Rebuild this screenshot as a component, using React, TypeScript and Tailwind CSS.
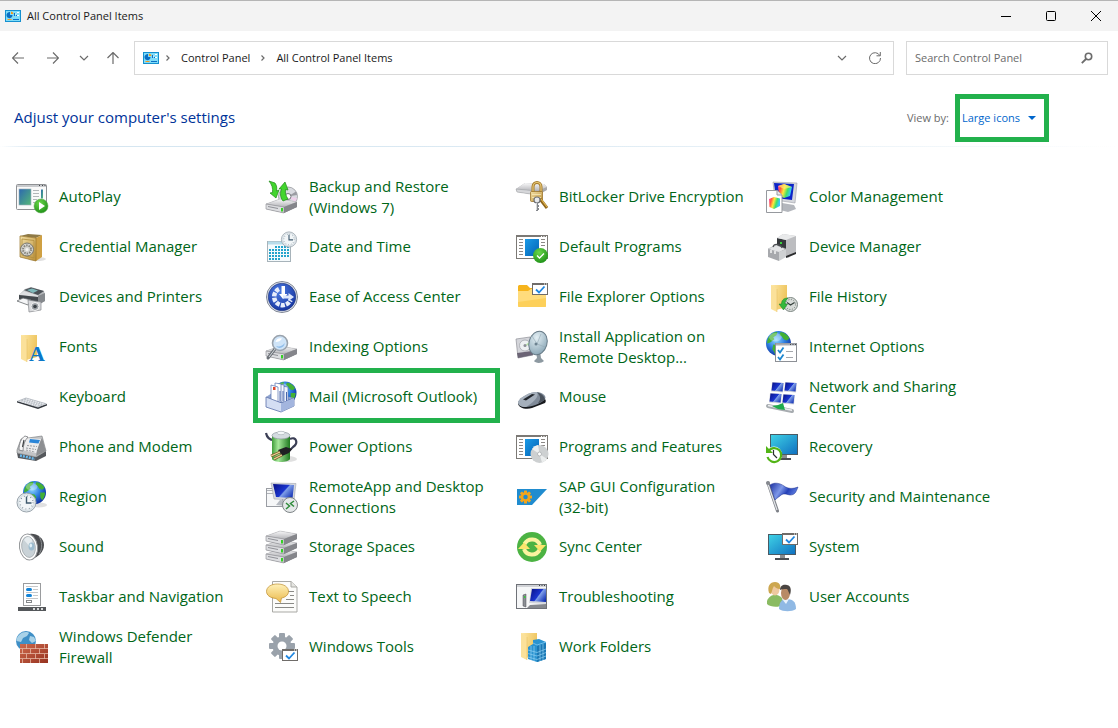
import { useState } from "react";
import type { ReactNode } from "react";

// Gradients shared by all the item icons
function IconDefs() {
  return (
    <svg width="0" height="0" className="block" aria-hidden="true">
      <defs>
        <radialGradient id="globe" cx="0.4" cy="0.35" r="0.7">
          <stop offset="0" stopColor="#8fd8ff" />
          <stop offset="0.5" stopColor="#2f7fe0" />
          <stop offset="1" stopColor="#0b2a9c" />
        </radialGradient>
        <radialGradient id="greenBall" cx="0.4" cy="0.3" r="0.8">
          <stop offset="0" stopColor="#6ad64a" />
          <stop offset="1" stopColor="#178a12" />
        </radialGradient>
        <radialGradient id="blueBall" cx="0.4" cy="0.3" r="0.8">
          <stop offset="0" stopColor="#4c7be0" />
          <stop offset="1" stopColor="#122f9c" />
        </radialGradient>
        <radialGradient id="dish" cx="0.35" cy="0.3" r="0.8">
          <stop offset="0" stopColor="#e3eff4" />
          <stop offset="1" stopColor="#86a3b3" />
        </radialGradient>
        <linearGradient id="folder" x1="0" x2="1" y1="0" y2="0.3">
          <stop offset="0" stopColor="#ffe9a8" />
          <stop offset="1" stopColor="#eec55f" />
        </linearGradient>
        <linearGradient id="gold" x1="0" x2="1" y1="0" y2="1">
          <stop offset="0" stopColor="#f3e0a6" />
          <stop offset="1" stopColor="#bb8f38" />
        </linearGradient>
        <linearGradient id="silver" x1="0" x2="0" y1="0" y2="1">
          <stop offset="0" stopColor="#f8f8f9" />
          <stop offset="1" stopColor="#b4b5b9" />
        </linearGradient>
        <linearGradient id="screen" x1="0" x2="1" y1="0" y2="1">
          <stop offset="0" stopColor="#3fd3e6" />
          <stop offset="1" stopColor="#0f6fc0" />
        </linearGradient>
        <linearGradient id="blueScreen" x1="0" x2="1" y1="0.2" y2="0.8">
          <stop offset="0" stopColor="#0a1590" />
          <stop offset="0.5" stopColor="#1a35cf" />
          <stop offset="0.56" stopColor="#7f9fe8" />
          <stop offset="1" stopColor="#1230b4" />
        </linearGradient>
        <linearGradient id="azure" x1="0" x2="1" y1="0" y2="1">
          <stop offset="0" stopColor="#1a9be8" />
          <stop offset="1" stopColor="#0462b4" />
        </linearGradient>
        <linearGradient id="photo" x1="0" x2="1" y1="0" y2="1">
          <stop offset="0" stopColor="#2c67b0" />
          <stop offset="1" stopColor="#54b878" />
        </linearGradient>
        <linearGradient id="battery" x1="0" x2="1" y1="0" y2="0">
          <stop offset="0" stopColor="#3f9e3a" />
          <stop offset="0.35" stopColor="#a6e89a" />
          <stop offset="1" stopColor="#1f7a20" />
        </linearGradient>
        <linearGradient id="brick" x1="0" x2="1" y1="0" y2="1">
          <stop offset="0" stopColor="#cf6a4c" />
          <stop offset="1" stopColor="#963220" />
        </linearGradient>
        <linearGradient id="bubble" x1="0" x2="0" y1="0" y2="1">
          <stop offset="0" stopColor="#fff1b8" />
          <stop offset="1" stopColor="#eab94c" />
        </linearGradient>
        <linearGradient id="flag" x1="0" x2="1" y1="0" y2="0.4">
          <stop offset="0" stopColor="#1b2fa0" />
          <stop offset="0.45" stopColor="#7d97e8" />
          <stop offset="0.7" stopColor="#2440b8" />
          <stop offset="1" stopColor="#5f7fe0" />
        </linearGradient>
        <linearGradient id="rainbow" x1="0" x2="1" y1="0" y2="0.3">
          <stop offset="0" stopColor="#ff4fd0" />
          <stop offset="0.25" stopColor="#ff5a3c" />
          <stop offset="0.5" stopColor="#ffe83c" />
          <stop offset="0.75" stopColor="#3fe06a" />
          <stop offset="1" stopColor="#38c8ff" />
        </linearGradient>
      </defs>
    </svg>
  );
}

function Globe({ cx, cy, r }: { cx: number; cy: number; r: number }) {
  return (
    <g transform={`translate(${cx} ${cy}) scale(${r / 12})`}>
      <circle r="12" fill="url(#globe)" />
      <path
        d="M-9.500-6C-7-10-3-11.500-1-11l-1 3-3 2 1 2-4 3-3 1c0-2 .5-4 1.500-6zM2-11c4 .5 7 3 8.500 6L8-3 5-4 3-7 1-8zM-5 1l5 1 2 3-2 3-1 3.500c-2 0-3-1-3-3l-2-3zM6 0l5 0c0 3-1 6-3 8L6 5z"
        fill="#43b034"
      />
      <ellipse cx="-3" cy="-6" rx="6" ry="4" fill="#fff" opacity="0.3" />
    </g>
  );
}

function Clock({ cx, cy, r }: { cx: number; cy: number; r: number }) {
  return (
    <g transform={`translate(${cx} ${cy}) scale(${r / 10})`}>
      <circle r="9.500" fill="#e4ebf0" stroke="#9aa4ac" />
      <circle r="7.800" fill="#f2f6f8" stroke="#c3ccd2" strokeWidth="0.600" />
      <circle r="6.500" fill="none" stroke="#6d7f8c" strokeWidth="1.200" strokeDasharray="0.700 2.700" />
      <path d="M0-6V0.500H5" fill="none" stroke="#3f5a6e" strokeWidth="1.400" />
    </g>
  );
}

function Gear({ cx, cy, r, color, hole }: { cx: number; cy: number; r: number; color: string; hole: string }) {
  return (
    <g transform={`translate(${cx} ${cy}) scale(${r / 13})`} fill={color}>
      {[0, 45, 90, 135].map((angle) => (
        <rect key={angle} x="-3" y="-13" width="6" height="26" rx="1" transform={`rotate(${angle})`} />
      ))}
      <circle r="9.500" />
      <circle r="4.500" fill={hole} />
    </g>
  );
}

function Drive({ y }: { y: number }) {
  return (
    <g transform={`translate(0 ${y})`}>
      <path d="M0 5 14 0 31 3V8L18 14 0 10z" fill="#8c8d92" />
      <path d="M0 5 14 0 31 3 18 8z" fill="url(#silver)" stroke="#b8b9bd" strokeWidth="0.500" />
      <path d="M0 5 18 8V14L0 10z" fill="#dcdde0" stroke="#8b8c90" strokeWidth="0.600" />
      <path d="M18 8 31 3V8L18 14z" fill="#85868b" />
      <path d="M2 7.500 12 9.500" stroke="#909197" />
      <rect x="15" y="9" width="2" height="3.500" fill="#35d024" />
    </g>
  );
}

function AppWindow({ children }: { children?: ReactNode }) {
  return (
    <>
      <rect x="0.500" y="4.500" width="31" height="23" fill="#fff" stroke="#7c7975" />
      <path d="M0 5H32" stroke="#7c7975" strokeWidth="2" />
      <path d="M25 5.500h1M27.500 5.500h1M30 5.500h1" stroke="#fff" />
      <path
        d="M3 8.500h4M3 11.500h4M3 14.500h4M3 17.500h4M3 20.500h4M3 23.500h4M25 8.500h4M25 11.500h4M25 14.500h4"
        stroke="#8c8986"
      />
      <rect x="9" y="8" width="14" height="17" fill="url(#azure)" />
      {children}
    </>
  );
}

function CheckWindow({ y }: { y: number }) {
  return (
    <g transform={`translate(16 ${y})`}>
      <rect x="0.500" y="0.500" width="15" height="11" fill="#fff" stroke="#6f6c69" />
      <path d="M0 1H16" stroke="#6f6c69" strokeWidth="2" />
      <path d="M12 1h1M14 1h1" stroke="#fff" />
      <path d="M4 6.500 7 9.500 12.500 3.500" fill="none" stroke="#1f86e0" strokeWidth="1.800" />
    </g>
  );
}

function TallFolder() {
  return (
    <>
      <path d="M5 4H21V26L10 29z" fill="url(#folder)" />
      <path d="M5 4 11 8V31L5 28z" fill="#fbe19a" />
      <path d="M11 8V31" stroke="#e3b95a" strokeWidth="0.500" />
    </>
  );
}

function Monitor({ x }: { x: number }) {
  return (
    <g transform={`translate(${x} 3)`}>
      <path d="M12 20h5v4h-5z" fill="#8a8d90" />
      <path d="M7 25h14" stroke="#4a4e52" strokeWidth="2" />
      <rect x="0.500" y="0.500" width="27" height="20" fill="url(#screen)" stroke="#4a5a64" />
    </g>
  );
}

const icons: Record<string, ReactNode> = {
  autoplay: (
    <>
      <rect x="0.500" y="3.500" width="30" height="25" rx="1" fill="#fafafa" stroke="#8f9194" />
      <path d="M1 5h29" stroke="#c9cbce" strokeWidth="2" />
      <path d="M23 4.500h1M26 4.500h1M28.500 4.500h1" stroke="#44474a" />
      <rect x="3" y="8" width="12" height="16" fill="url(#photo)" stroke="#9fb0bb" strokeWidth="0.600" />
      <path d="M17 9.500h6M17 12.500h6M17 15.500h6M17 18.500h4M17 21.500h2" stroke="#b3b7ba" />
      <path d="M25 8.500h2v9h-2z" fill="url(#photo)" />
      <circle cx="25" cy="25" r="7" fill="url(#greenBall)" stroke="#5aa64c" strokeWidth="0.500" />
      <path d="M23 21 29 25 23 29z" fill="#fff" />
    </>
  ),
  backup: (
    <>
      <circle cx="22" cy="15.500" r="9.500" fill="#d9dbe0" stroke="#8b8d92" strokeWidth="0.700" />
      <path d="M22 15.500 30 10.500A9.500 9.500 0 0 1 31 14z" fill="#9a9ca2" />
      <path d="M22 15.500 31 17A9.500 9.500 0 0 1 29 21z" fill="#eed0ea" />
      <path d="M22 15.500 14 20A9.500 9.500 0 0 0 19 24.500z" fill="#b8dcc8" />
      <circle cx="22" cy="15.500" r="3" fill="#fff" stroke="#75777c" />
      <Drive y={18} />
      <path d="M3 0 9 2C11 5 11 7 10.500 10L13 9 10 17 4 12 6.500 11.500C7 7 6 4 3 0z" fill="#43d52e" stroke="#208a18" strokeWidth="0.700" />
      <path d="M13 8 19 1 22 9 19.500 8.500C19 12 20 15 22 18L17 20C14 16 14 12 15.500 8z" fill="#43d52e" stroke="#208a18" strokeWidth="0.700" />
    </>
  ),
  bitlocker: (
    <>
      <path d="M0 8 9 2 28 3 31 6V9L22 14 1 11z" fill="#a9aaae" />
      <path d="M0 8 9 2 28 3 31 6 21 10z" fill="url(#silver)" />
      <path d="M0 8 21 10V14L1 11z" fill="#d6d7da" stroke="#9b9ca0" strokeWidth="0.500" />
      <path d="M17 12V6C17 0 25 0 25 6V12" fill="none" stroke="#a37a2a" strokeWidth="3" />
      <path d="M17 12V6C17 0 25 0 25 6V12" fill="none" stroke="#e8c878" strokeWidth="1.200" />
      <rect x="14.500" y="10.500" width="12" height="10" rx="1" fill="url(#gold)" stroke="#94691a" strokeWidth="0.700" />
      <path d="M16 13.500h9M16 16.500h9" stroke="#f8eabb" strokeWidth="0.800" />
      <path d="M24 18 31 27" stroke="#8f651b" strokeWidth="3" />
      <path d="M25 18 31 26" stroke="#e0b650" strokeWidth="1.200" />
      <circle cx="21" cy="19" r="3" fill="#e9eaec" stroke="#6f7277" strokeWidth="1.200" />
      <path d="M21 22V30M21 25h2M21 28h2" stroke="#85888d" strokeWidth="2" />
      <path d="M20.500 22V29" stroke="#eceded" strokeWidth="0.800" />
    </>
  ),
  color: (
    <>
      <path d="M7 1 31 2 29 22 9 19z" fill="#d5d7dc" stroke="#9da0a8" strokeWidth="0.600" />
      <path d="M8 2 28 3 26 19 10 17z" fill="#0d23c8" />
      <path d="M12 5 18 3 26 6 24 15 18 17 13 14z" fill="url(#rainbow)" />
      <path d="M12 5 18 8 26 6 18 3z" fill="#ffee6a" opacity="0.700" />
      <path d="M16 22 28 24 30 28 22 31 14 29z" fill="#b4b7bd" />
      <path d="M0.500 9.500H11L16 14V31.500H0.500z" fill="#fff" stroke="#96999e" />
      <path d="M11 9.500V14H16" fill="#e9eaec" stroke="#96999e" />
      <path d="M3 18 8 16 14 17.500V25L8 28 3.500 26z" fill="url(#rainbow)" />
    </>
  ),
  credential: (
    <>
      <ellipse cx="21" cy="28" rx="9" ry="2" fill="#000" opacity="0.120" />
      <path d="M4 5 12 3 26 4 20 7z" fill="#8f7a46" />
      <path d="M20 7 26 4V26L20 30z" fill="#cfa043" />
      <path d="M4 5 20 7V30L4 26z" fill="url(#gold)" stroke="#9a7426" strokeWidth="0.700" />
      <path d="M6 8 18 9.500V27L6 24z" fill="none" stroke="#b08d3c" strokeWidth="0.800" />
      <circle cx="11" cy="18.500" r="6.500" fill="#d4d4d0" stroke="#77766e" />
      <circle cx="11" cy="18.500" r="4" fill="none" stroke="#85847c" strokeDasharray="1.500 1" strokeWidth="2" />
      <circle cx="11" cy="18.500" r="1.500" fill="#f3f3f0" />
    </>
  ),
  date: (
    <>
      <rect x="1.500" y="10.500" width="23" height="20" fill="#f5fafc" stroke="#a7b3ba" />
      <path d="M2 12h22" stroke="#b8dcea" strokeWidth="3" />
      <path
        d="M9 16H23M3 19H23M3 22H23M3 25H23M3 28H14"
        stroke="#22a4cc"
        strokeWidth="2"
        strokeDasharray="2 1"
      />
      <Clock cx={23} cy={8.5} r={8} />
    </>
  ),
  defaults: (
    <AppWindow>
      <circle cx="24.500" cy="24.500" r="7.500" fill="url(#greenBall)" />
      <path d="M21 24.500 23.500 27 28 22.500" fill="none" stroke="#fff" strokeWidth="1.300" />
    </AppWindow>
  ),
  device: (
    <>
      <path d="M11 7 17 3 30 5V22L22 27 11 20z" fill="#bcbdc0" />
      <path d="M11 7 20 9V20L11 19z" fill="#34373a" />
      <path d="M11 7 17 3 30 5 20 9z" fill="#e9eaeb" />
      <rect x="14" y="11" width="2" height="2" fill="#39d23c" />
      <path d="M2 18 10 14 20 18 12 22z" fill="#e3e4e6" stroke="#9fa1a5" strokeWidth="0.500" />
      <path d="M2 18 13 21V30L2 26z" fill="#a7a9ad" />
      <path d="M13 21 20 18V26L13 30z" fill="#cfd1d3" />
      <path d="M5 19v3M9 20v3" stroke="#f4f4f4" strokeWidth="1.500" />
      <path d="M7 16C8 12 15 13 16 17" fill="none" stroke="#4c4f53" strokeWidth="1.200" />
      <path d="M20 25 30 21V23L20 27z" fill="#2a2c2e" />
    </>
  ),
  printers: (
    <>
      <path d="M3 14 9 8 15 6 28 10 29 14V20L22 24 3 18z" fill="#b4b7ba" />
      <path d="M8 9 15 6.500 28 10 22 14z" fill="#4b5157" />
      <path d="M11 9 16 7.500 22 9.500 17 12z" fill="#7fb8ba" />
      <path d="M4 13 8 10 22 14.500V16L4 14z" fill="#dfe0e2" />
      <path d="M3 14 22 16V22L3 18z" fill="#43484d" />
      <path d="M22 15 29 12V20L22 24z" fill="#85898d" />
      <path d="M1 20 7 17 15 19 12 24z" fill="#f5f6f7" stroke="#6a6d71" strokeWidth="0.800" />
      <path d="M12 19 25 21V29L13 31z" fill="#d9dadd" stroke="#85888c" strokeWidth="0.700" />
      <circle cx="19" cy="25.500" r="4" fill="#9a9fa4" stroke="#f4f4f4" />
      <circle cx="19" cy="25.500" r="1.800" fill="#3a4046" />
    </>
  ),
  ease: (
    <>
      <circle cx="16" cy="16" r="15.500" fill="#e8ebf2" stroke="#7f8694" />
      <circle cx="16" cy="16" r="13.800" fill="url(#blueBall)" stroke="#1c3276" strokeWidth="0.600" />
      <path
        d="M13 8A8.500 8.500 0 1 0 24.500 19"
        fill="none"
        stroke="#e8eefb"
        strokeWidth="4.500"
        strokeDasharray="4 1.200"
      />
      <path d="M15.500 5H19V13H21.500L17 18 13 13H15.500z" fill="#fff" />
      <path d="M17 14.500H22.500V12L28 16 22.500 20V17.500H17z" fill="#dfe8fb" />
    </>
  ),
  explorer: (
    <>
      <path d="M2 5.500C2 4.500 3 4 3.500 4H11L14 7H29V13H2z" fill="#f6b41c" />
      <path d="M2 10 12 10 15 8H30V25C30 26 29 26 28.500 26H3.500C2.500 26 2 25.500 2 25z" fill="#ffdc7c" />
      <path d="M2 21 30 17V25C30 26 29 26 28.500 26H3.500C2.500 26 2 25.500 2 25z" fill="#fdd05a" />
      <CheckWindow y={2} />
    </>
  ),
  history: (
    <>
      <TallFolder />
      <circle cx="24.500" cy="23.500" r="7" fill="#d7dbd8" stroke="#7c8682" />
      <circle cx="24.500" cy="23.500" r="5" fill="none" stroke="#707a76" strokeDasharray="1 1.600" />
      <path d="M21 21.500 24.500 24 28.500 21.500" fill="none" stroke="#35403c" strokeWidth="1.200" />
      <path d="M22 17C17 17 15.500 20 15.500 23H13L17.500 29 21.500 23H19C19 21 20 19 22 17z" fill="#35b83c" stroke="#1e8026" strokeWidth="0.500" />
    </>
  ),
  fonts: (
    <>
      <TallFolder />
      <text x="13" y="30" fontFamily="Liberation Serif, serif" fontSize="22" fontWeight="700" fill="#0a78c8">
        A
      </text>
    </>
  ),
  indexing: (
    <>
      <Drive y={15} />
      <path d="M9 18 2 27" stroke="#6d7278" strokeWidth="3" strokeLinecap="round" />
      <path d="M9 18 3 26" stroke="#d3d7db" strokeWidth="1" />
      <circle cx="14" cy="12" r="7.500" fill="#cfe4f8" stroke="#9aa3ad" strokeWidth="1.600" />
      <path d="M9.500 11C10 8 13 6.500 16 7.500 15 10 12 11 9.500 11z" fill="#fff" />
      <path d="M10 15C13 16 17 15 18.500 12 19 16 13 19 10 15z" fill="#8fbdea" />
    </>
  ),
  install: (
    <>
      <path d="M0 8 14 6 17 24 2 27z" fill="#d4d5da" stroke="#8f9198" strokeWidth="0.700" />
      <path d="M1 22 16 20 17 24 2 27z" fill="#6b6475" />
      <circle cx="9" cy="14.500" r="5.500" fill="#eef0f2" stroke="#9ea1a7" strokeWidth="0.700" />
      <path d="M9 14.500 13 11 14 14z" fill="#b9e3a8" />
      <circle cx="9" cy="14.500" r="1.500" fill="#8c8f96" />
      <path d="M20 21 24 20 25 27 28 30C25 33 19 32 18 30L21 27z" fill="#8d99a1" />
      <ellipse cx="22" cy="12" rx="9" ry="12" transform="rotate(16 22 12)" fill="url(#dish)" stroke="#687b87" />
      <path d="M16 5 21 13 29 16M21 13 25 3" stroke="#93a8b4" strokeWidth="0.600" fill="none" />
      <circle cx="20" cy="13" r="1.500" fill="#6c8290" />
    </>
  ),
  internet: (
    <>
      <Globe cx={12.5} cy={12.5} r={12.5} />
      <rect x="9.500" y="12.500" width="21" height="18" fill="#fff" stroke="#8d9096" />
      <path d="M10 13.500h20" stroke="#a9adb4" strokeWidth="2" />
      <path d="M24 13.500h1M26.500 13.500h1M29 13.500h1" stroke="#44474c" />
      <path d="M12 19 14 21.500 17.500 16.500M12 26 14 28.500 17.500 23.500" fill="none" stroke="#1c86cf" strokeWidth="1.800" />
      <path d="M20 20.500h7M20 26.500h7" stroke="#a4a7ac" />
    </>
  ),
  keyboard: (
    <>
      <path d="M1 20 22 26 31 23V24.500L22 28 1 21.500z" fill="#34383e" />
      <path d="M1 20 10 16.500 31 22.500 22 26.500z" fill="#b9bec5" />
      <path
        d="M4 20 23 25.200M7 19 25.500 24.200M10 18 28 23.200"
        stroke="#eceef1"
        strokeWidth="1.200"
        strokeDasharray="1.600 0.800"
      />
    </>
  ),
  mail: (
    <>
      <Globe cx={19} cy={12} r={11.5} />
      <path d="M0 16 6 12 28 17 14 22z" fill="#8fa4d0" />
      <path d="M15 5 22 6V21L15 22z" fill="#eef3fd" stroke="#5470b0" strokeWidth="0.700" />
      <path d="M12 3 18 4V21L12 21z" fill="#f5f8ff" stroke="#5470b0" strokeWidth="0.700" />
      <path d="M9 2 15 3V21L9 21z" fill="#fff" stroke="#5470b0" strokeWidth="0.700" />
      <path d="M5 4 12 6V23L5 19z" fill="#fff" stroke="#5470b0" strokeWidth="0.700" />
      <rect x="7" y="6" width="2.500" height="3" fill="#e0452c" />
      <path d="M14 10V20M17 10V20M20.500 11V20" stroke="#4a66ac" />
      <path d="M0 16 13 21 16 22 28 17V25L15 31 0 26z" fill="#d4def3" stroke="#5a70a8" strokeWidth="0.800" />
      <path d="M15 22.500V31L28 25V17z" fill="#a3b5de" />
    </>
  ),
  mouse: (
    <>
      <path d="M2 22C2 27 10 29 16 27L29 22C30 21 30 19 29 18z" fill="#17191d" />
      <path d="M2 21C4 16 14 11 21 11 26 11 31 15 29 18 26 22 16 26 10 26 5 26 2 24 2 21z" fill="#7f8a98" />
      <path d="M2 21C4 16 14 11 21 11 24 15 17 22 10 26 5 26 2 24 2 21z" fill="#a5afbb" />
      <path d="M7 18.500 16 13 19 13.500 10 19.500z" fill="#23272d" />
      <path d="M21 11.500C25 12 28 15 29 18 27 20 24 22 22 22 25 19 25 15 21 11.500z" fill="#4a525c" />
    </>
  ),
  network: (
    <>
      {[
        [6, 1],
        [19, 1],
        [4, 12],
        [17, 13],
      ].map(([x, y]) => (
        <g key={`${x}-${y}`} transform={`translate(${x} ${y})`}>
          <path d="M0 0 12 1 11 10.500 -1 9.500z" fill="#d4d7de" />
          <path d="M0.500 0.500 11.500 1 10.500 9.500 -0.500 8.500z" fill="url(#blueScreen)" />
        </g>
      ))}
      <path d="M2 25 26 30" stroke="#a7acb0" strokeWidth="4" strokeLinecap="round" />
      <path d="M2 24.500 26 29.200" stroke="#eceef0" strokeWidth="1.500" />
      <path d="M6 25 12 24 17 22 19 29 12 28z" fill="#1faa4b" />
    </>
  ),
  phone: (
    <>
      <path d="M1 22 20 26 30 20V25L20 30 2 27z" fill="#55585c" />
      <path d="M1 19 5 8 26 5 30 20 20 26 1 22z" fill="#c2c3c5" stroke="#76787b" strokeWidth="0.600" />
      <path d="M26 7 30 20 20 25 22 14z" fill="#8d8f92" />
      <path d="M9 7 25 8 20 22 6 19z" fill="#ececed" />
      <path d="M14 8 24 9 22.500 12.500 13 11.500z" fill="#2b86d8" />
      <path d="M11 14.500 21 15.500M10 17 20 18.500M10 19 19 21" stroke="#9a9da1" strokeDasharray="2 1" />
      <path d="M3 19C3 13 5 7 9 5L12 6C9 9 7 14 7 20z" fill="#f6f6f6" stroke="#77797c" strokeWidth="0.800" />
      <path d="M8 9 6.500 16" stroke="#3e4144" strokeWidth="1.200" />
      <path d="M4 24.500 19 28" stroke="#69b9ee" strokeWidth="2.500" strokeDasharray="2 1" />
    </>
  ),
  power: (
    <>
      <ellipse cx="22" cy="28" rx="9" ry="3" fill="#000" opacity="0.120" />
      <path d="M0 2C1 7 4 9 8 9M24 8C30 5 33 12 27 16L23 20" fill="none" stroke="#3b3f55" strokeWidth="2.200" />
      <path d="M6 5V28C8 32 22 32 24 28V5z" fill="url(#battery)" />
      <ellipse cx="15" cy="4.500" rx="9" ry="3.500" fill="#d4dbe0" stroke="#8c979e" strokeWidth="0.700" />
      <ellipse cx="15" cy="2" rx="4" ry="1.700" fill="#f3f6f8" stroke="#9aa5ab" strokeWidth="0.500" />
      <path d="M12 19 20 16 26 18 23 22 16 25z" fill="#1f2023" />
      <path d="M14 21 5 25M16 24 8 28" stroke="#7e5f2a" strokeWidth="2.600" />
      <path d="M14 21 5 25M16 24 8 28" stroke="#ecd49a" strokeWidth="1.200" />
    </>
  ),
  programs: (
    <AppWindow>
      <circle cx="23.500" cy="23" r="9" fill="#cdd0d1" />
      <path d="M23.500 23 16 18A9 9 0 0 1 22 14z" fill="#eef0f0" />
      <path d="M23.500 23 31 28A9 9 0 0 1 26 31.500z" fill="#eceeee" />
      <circle cx="23.500" cy="23" r="2" fill="#fff" stroke="#b5b8ba" />
    </AppWindow>
  ),
  recovery: (
    <>
      <Monitor x={4} />
      <circle cx="8" cy="23.500" r="8" fill="#fff" />
      <path d="M2.500 20A7 7 0 1 1 1.500 26" fill="none" stroke="#52b416" strokeWidth="2.200" />
      <path d="M0 15V22H7z" fill="#52b416" />
      <path d="M7.500 19V23.500L11 27" fill="none" stroke="#2c2f31" strokeWidth="1.200" />
    </>
  ),
  region: (
    <>
      <ellipse cx="23" cy="24" rx="8" ry="2.500" fill="#000" opacity="0.120" />
      <Globe cx={18.5} cy={11.5} r={11.5} />
      <Clock cx={10.5} cy={21.5} r={10} />
    </>
  ),
  remote: (
    <>
      <rect x="0.500" y="7.500" width="16" height="18" fill="#f6f7f8" stroke="#9a9da3" />
      <path d="M1 9.500H8M1 12.500H7" stroke="#b0b3b9" />
      <path d="M5 2 30 2.500 28 19 8 18z" fill="#d5d8de" stroke="#979ba4" strokeWidth="0.500" />
      <path d="M7 3 28 4 26.500 17 10 16z" fill="url(#blueScreen)" />
      <path d="M14 19 22 20 20 25 10 24z" fill="#b6bac1" />
      <circle cx="24" cy="24" r="7.500" fill="#e5e8e9" stroke="#7f8588" />
      <path d="M20 22 23.500 25 20 28M28 20 24.500 22.500 28 25.500" fill="none" stroke="#2e8b3a" strokeWidth="1.500" />
    </>
  ),
  sap: (
    <>
      <path d="M1 8H31L16 24H1z" fill="#208ccf" />
      <Gear cx={9.5} cy={16} r={6.5} color="#f2a51c" hole="#208ccf" />
    </>
  ),
  security: (
    <>
      <path d="M2 2 11.500 30" stroke="#7d8087" strokeWidth="3" strokeLinecap="round" />
      <path d="M2 3 11 29" stroke="#e3e5e9" strokeWidth="1.200" />
      <circle cx="2" cy="2" r="2" fill="#85888e" />
      <path d="M4 4C8 1 14 2 18 5 22 8 27 8 32 6 30 11 29 14 24 14 19 13 17 12 14 15 11 17 9 19 9 19z" fill="url(#flag)" stroke="#1a2d8c" strokeWidth="0.500" />
    </>
  ),
  sound: (
    <>
      <path d="M14 3C20 2 28 7 28 14 28 21 22 26 16 28z" fill="#4b4d50" />
      <path d="M23 6C26 9 27 18 23 23" fill="none" stroke="#8a8d90" />
      <ellipse cx="12.500" cy="16" rx="9" ry="13" transform="rotate(-8 12.500 16)" fill="#fff" stroke="#8f9295" />
      <ellipse cx="12.500" cy="16" rx="6.800" ry="10.500" transform="rotate(-8 12.500 16)" fill="#c9d2d7" stroke="#9aa1a6" strokeWidth="0.700" />
      <path d="M8 9C10 5 14 5 16 9L15 17z" fill="#e6ecef" />
      <ellipse cx="15.500" cy="15.500" rx="3" ry="4" fill="#9dbccf" />
      <ellipse cx="14.800" cy="14.500" rx="1.300" ry="2" fill="#e3f1f8" />
    </>
  ),
  storage: (
    <>
      <Drive y={18} />
      <Drive y={9} />
      <Drive y={0} />
    </>
  ),
  sync: (
    <>
      <circle cx="16" cy="16" r="15" fill="#4cb343" />
      <path d="M8.500 13A8.500 8.500 0 0 1 24 14" fill="none" stroke="#fbf3a0" strokeWidth="4" />
      <path d="M23.500 19A8.500 8.500 0 0 1 8 18" fill="none" stroke="#fbf3a0" strokeWidth="4" />
      <path d="M18 14H30L24 20.500zM2 18H14L8 11.500z" fill="#fbe56c" />
    </>
  ),
  system: (
    <>
      <Monitor x={2} />
      <CheckWindow y={2} />
    </>
  ),
  taskbar: (
    <>
      <rect x="7.500" y="2.500" width="17" height="22" fill="#fff" stroke="#9a9c9e" />
      <path d="M10 5.500H22M17 8.500h5M10 11.500h12M17 14.500h5M10 17.500h12" stroke="#c6c8ca" />
      <rect x="10" y="7" width="6" height="3" rx="1.500" fill="#1384d8" />
      <rect x="10" y="13" width="6" height="3" rx="1.500" fill="#1384d8" />
      <rect x="10.500" y="19.500" width="5" height="2" fill="#fff" stroke="#85888b" />
      <rect x="2" y="26" width="28" height="4" fill="#54575a" />
      <path d="M17 28h2M21 28h2M25 28h2" stroke="#d7d9da" strokeWidth="2" />
    </>
  ),
  speech: (
    <>
      <path d="M6.500 0.500H25L31 6V31H6.500z" fill="#fcfcfa" stroke="#a9a9a5" />
      <path d="M25 0.500V6H31" fill="#e5e5e1" stroke="#a9a9a5" />
      <path d="M22 10.500H28M24 14.500H28M20 18.500H28M9 22.500H28M9 26.500H28" stroke="#8a8a86" />
      <path d="M11.500 3C18 3 22.500 6 22.500 10.500 22.500 14 19 16.500 15.500 17L14.500 21.500 10 17.500C4 17 0.500 14 0.500 10.500 0.500 6 5 3 11.500 3z" fill="url(#bubble)" stroke="#bd8c2c" strokeWidth="0.700" />
    </>
  ),
  trouble: (
    <>
      <rect x="0.500" y="3.500" width="30" height="24" fill="#f6f7f8" stroke="#6f7278" />
      <path d="M1 5H30" stroke="#d0d2d6" strokeWidth="2" />
      <path d="M23 4.500h1M25.500 4.500h1M28 4.500h1" stroke="#3c3f44" />
      <path d="M7 14 10 13V26L7 25z" fill="#8b8e94" stroke="#4c4f54" strokeWidth="0.500" />
      <rect x="8" y="15" width="1.500" height="2" fill="#38c93c" />
      <path d="M15 7H30V23L13 22z" fill="#d2d5dc" />
      <path d="M16 8H30V21L14 20z" fill="url(#blueScreen)" />
      <path d="M14 24 30 23V27H11z" fill="#85888e" />
    </>
  ),
  users: (
    <>
      <path d="M1 20C3 15 6 14 9 14 13 14 16 16 17 19V24C12 27 4 26 1 23z" fill="#8abb62" />
      <ellipse cx="9" cy="8.500" rx="4.500" ry="6" fill="#eec9a0" />
      <path d="M3 12C1 5 4 1 9 1 14 1 15 5 14 8 11 8 9 6 8 5 6 8 6 11 5 13z" fill="#cda750" />
      <path d="M13 28C13 21 16 18 20 18 26 18 30 20 30 28 26 31 17 31 13 28z" fill="#90b9e4" />
      <path d="M16 18 20 23 23 18z" fill="#e9f2fb" />
      <ellipse cx="19.500" cy="12" rx="4.500" ry="7" fill="#b88a66" />
      <path d="M14 9C14 4 18 3 21 4 26 5 25 11 24 14 23 12 22 9 21 8 18 8 15 8 14 9z" fill="#4a4542" />
    </>
  ),
  firewall: (
    <>
      <circle cx="10" cy="10" r="10" fill="#3f8fc6" />
      <path d="M3 4C7 0 12 1 13 2L11 5 7 7 5 11 0.500 10C0.500 8 1 6 3 4zM14 5 18 6 20 10 16 12 13 9z" fill="#a9d2e8" />
      <rect x="4" y="13" width="28" height="19" fill="url(#brick)" />
      <path
        d="M4 17.500H32M4 22.500H32M4 27.500H32M10.500 13v5M19.500 13v5M28.500 13v5M6.500 18v5M14.500 18v5M23.500 18v5M10.500 23v5M19.500 23v5M28.500 23v5M6.500 28v4M14.500 28v4M23.500 28v4"
        stroke="#e6b8a4"
        strokeWidth="0.800"
      />
    </>
  ),
  tools: (
    <>
      <Gear cx={16} cy={15} r={13} color="#9aa2ab" hole="#ffffff" />
      <CheckWindow y={18} />
    </>
  ),
  work: (
    <>
      <g transform="translate(0 -2)">
        <TallFolder />
      </g>
      <path d="M12 16 17 13V9L23 8 30 11V28L21 31 12 28z" fill="#2a93d0" />
      <path d="M21 15 30 12V28L21 31z" fill="#1b78b4" />
      <path
        d="M12 19 21 21.500 30 18M12 22.500 21 25 30 21.500M12 26 21 28.500 30 25M15 15V29M18 15V30M24 14V30M27 13V29M17 12 21 14 30 11"
        fill="none"
        stroke="#8fd0f2"
        strokeWidth="0.700"
      />
    </>
  ),
};

interface PanelItem {
  name: string;
  icon: string;
  marked?: boolean;
}

const items: PanelItem[] = [
  { name: "AutoPlay", icon: "autoplay" },
  { name: "Backup and Restore\n(Windows 7)", icon: "backup" },
  { name: "BitLocker Drive Encryption", icon: "bitlocker" },
  { name: "Color Management", icon: "color" },
  { name: "Credential Manager", icon: "credential" },
  { name: "Date and Time", icon: "date" },
  { name: "Default Programs", icon: "defaults" },
  { name: "Device Manager", icon: "device" },
  { name: "Devices and Printers", icon: "printers" },
  { name: "Ease of Access Center", icon: "ease" },
  { name: "File Explorer Options", icon: "explorer" },
  { name: "File History", icon: "history" },
  { name: "Fonts", icon: "fonts" },
  { name: "Indexing Options", icon: "indexing" },
  { name: "Install Application on\nRemote Desktop...", icon: "install" },
  { name: "Internet Options", icon: "internet" },
  { name: "Keyboard", icon: "keyboard" },
  { name: "Mail (Microsoft Outlook)", icon: "mail", marked: true },
  { name: "Mouse", icon: "mouse" },
  { name: "Network and Sharing\nCenter", icon: "network" },
  { name: "Phone and Modem", icon: "phone" },
  { name: "Power Options", icon: "power" },
  { name: "Programs and Features", icon: "programs" },
  { name: "Recovery", icon: "recovery" },
  { name: "Region", icon: "region" },
  { name: "RemoteApp and Desktop\nConnections", icon: "remote" },
  { name: "SAP GUI Configuration\n(32-bit)", icon: "sap" },
  { name: "Security and Maintenance", icon: "security" },
  { name: "Sound", icon: "sound" },
  { name: "Storage Spaces", icon: "storage" },
  { name: "Sync Center", icon: "sync" },
  { name: "System", icon: "system" },
  { name: "Taskbar and Navigation", icon: "taskbar" },
  { name: "Text to Speech", icon: "speech" },
  { name: "Troubleshooting", icon: "trouble" },
  { name: "User Accounts", icon: "users" },
  { name: "Windows Defender\nFirewall", icon: "firewall" },
  { name: "Windows Tools", icon: "tools" },
  { name: "Work Folders", icon: "work" },
];

function PanelIcon() {
  return (
    <svg viewBox="0 0 16 12" className="h-3 w-4 shrink-0" aria-hidden="true">
      <rect x="0.500" y="0.500" width="15" height="11" fill="#7fdcf8" stroke="#1590cf" />
      <path d="M2 3.500A3 3 0 1 0 7.500 5H5V2A3 3 0 0 0 2 3.500z" fill="#0b6fc4" />
      <path d="M6 1.500A3 3 0 0 1 8.500 4H6z" fill="#f59a1c" />
      <path d="M9.500 5 11 3.500M12 2.500h2M12 5.500h2" stroke="#fff" />
      <path d="M9.500 3v3M11 5.500h1" stroke="#0b6fc4" />
      <path d="M2.500 9.500h4" stroke="#f59a1c" />
      <path d="M8 9.500h6" stroke="#0b6fc4" />
    </svg>
  );
}

function Chevron({ className, d }: { className: string; d: string }) {
  return (
    <svg viewBox="0 0 10 10" className={className} fill="none" stroke="currentColor" aria-hidden="true">
      <path d={d} strokeWidth="1.200" />
    </svg>
  );
}

export default function App() {
  const [view, setView] = useState("Large icons");
  const [query, setQuery] = useState("");

  return (
    <div className="min-h-screen bg-white font-['Open_Sans','Noto_Sans',sans-serif] text-[11px] text-[#1a1a1a]">
      <IconDefs />
      <header className="flex h-[31px] items-center border-t border-[#b5b5b5] bg-[#f3f3f3] pl-[5px]">
        <PanelIcon />
        <h1 className="ml-1.5 flex-1">All Control Panel Items</h1>
        <div className="flex h-full text-black">
          <button aria-label="Minimize" className="flex w-[45px] items-center justify-center">
            <svg viewBox="0 0 10 10" className="size-2.5" stroke="currentColor">
              <path d="M0 5.500h10" />
            </svg>
          </button>
          <button aria-label="Maximize" className="flex w-[45px] items-center justify-center">
            <svg viewBox="0 0 10 10" className="size-2.5" fill="none" stroke="currentColor">
              <rect x="0.500" y="0.500" width="9" height="9" rx="1" />
            </svg>
          </button>
          <button aria-label="Close" className="flex w-[45px] items-center justify-center">
            <svg viewBox="0 0 10 10" className="size-2.5" stroke="currentColor">
              <path d="M0 0 10 10M10 0 0 10" />
            </svg>
          </button>
        </div>
      </header>

      <nav className="flex items-center gap-3 pt-2.5 pr-2.5 pl-3 text-[#6b6b6b]">
        <div className="flex w-[110px] items-center">
          <button aria-label="Back" className="w-[35px]">
            <svg viewBox="0 0 12 12" className="size-3" fill="none" stroke="currentColor" strokeWidth="1.200">
              <path d="M12 6H0.500M6 0.500 0.500 6 6 11.500" />
            </svg>
          </button>
          <button aria-label="Forward" className="w-[32px]">
            <svg viewBox="0 0 12 12" className="size-3" fill="none" stroke="currentColor" strokeWidth="1.200">
              <path d="M0 6H11.500M6 0.500 11.500 6 6 11.500" />
            </svg>
          </button>
          <button aria-label="Recent locations" className="w-[28px]">
            <Chevron className="size-2.5" d="M1 3 5 7 9 3" />
          </button>
          <button aria-label="Up">
            <svg viewBox="0 0 12 12" className="size-3" fill="none" stroke="currentColor" strokeWidth="1.200">
              <path d="M6 12V0.500M0.500 6 6 0.500 11.500 6" />
            </svg>
          </button>
        </div>
        <div className="flex h-[34px] flex-1 items-center border border-[#d9d9d9] pr-3 pl-2">
          <PanelIcon />
          <Chevron className="ml-1 size-2.5" d="M3.500 2.500 6 5 3.500 7.500" />
          <a href="#control-panel" className="ml-2 text-[#1a1a1a]">
            Control Panel
          </a>
          <Chevron className="mx-2 size-2.5" d="M3.500 2.500 6 5 3.500 7.500" />
          <a href="#all-items" className="flex-1 text-[#1a1a1a]">
            All Control Panel Items
          </a>
          <button aria-label="Previous locations">
            <Chevron className="size-2.5" d="M1 3 5 7 9 3" />
          </button>
          <button aria-label="Refresh" className="ml-[22px]">
            <svg viewBox="0 0 12 12" className="size-3" fill="none" stroke="currentColor">
              <path d="M10.800 3.500A5.500 5.500 0 1 0 11.500 6M11.300 0V3.800H7.500" />
            </svg>
          </button>
        </div>
        <div className="flex h-[34px] w-[202px] items-center border border-[#d9d9d9] pr-3.5 pl-2">
          <input
            type="search"
            aria-label="Search Control Panel"
            placeholder="Search Control Panel"
            value={query}
            onChange={(e) => setQuery(e.target.value)}
            className="min-w-0 flex-1 outline-none placeholder:text-[#6b6b6b]"
          />
          <svg viewBox="0 0 12 12" className="size-3" fill="none" stroke="currentColor" aria-hidden="true">
            <circle cx="7.500" cy="4.500" r="3.200" strokeWidth="1.600" />
            <path d="M5 7 0.800 11.200" strokeWidth="1.800" />
          </svg>
        </div>
      </nav>

      <div className="mt-[19px] flex h-12 items-center pr-[69px] pl-3.5">
        <h2 className="flex-1 pb-0.5 text-[15px] text-[#003399]">Adjust your computer's settings</h2>
        <label htmlFor="view" className="mr-1.5 text-[#6b6b6b]">
          View by:
        </label>
        <div className="flex h-12 w-[94px] items-center border-5 border-[#22b14c] pl-0.5">
          <select
            id="view"
            value={view}
            onChange={(e) => setView(e.target.value)}
            className="w-[66px] appearance-none text-[#0066cc] outline-none"
          >
            <option>Category</option>
            <option>Large icons</option>
            <option>Small icons</option>
          </select>
          <svg viewBox="0 0 8 4" className="h-1 w-2" aria-hidden="true">
            <path d="M0 0H8L4 4z" fill="#0066cc" />
          </svg>
        </div>
      </div>
      <div className="mt-1 h-px bg-linear-to-r from-white via-[#d5e6f1] via-5% to-white">
        <div className="h-px bg-linear-to-r from-transparent via-[#d5e6f1] via-5% to-transparent" />
      </div>

      <main className="mt-[25px] grid auto-rows-[50px] grid-cols-[repeat(auto-fill,250px)]">
        {items.map((item) => (
          <a
            key={item.icon}
            href={`#${item.icon}`}
            className="relative flex items-center gap-[11px] pl-4 text-[15px] leading-[21px] text-[#006618]"
          >
            <svg viewBox="0 0 32 32" className="size-8 shrink-0 overflow-visible" aria-hidden="true">
              {icons[item.icon]}
            </svg>
            <span className="pb-px whitespace-pre">{item.name}</span>
            {item.marked && (
              <span className="absolute -top-1 right-0 -bottom-px left-[3px] border-5 border-[#22b14c]" />
            )}
          </a>
        ))}
      </main>
    </div>
  );
}
